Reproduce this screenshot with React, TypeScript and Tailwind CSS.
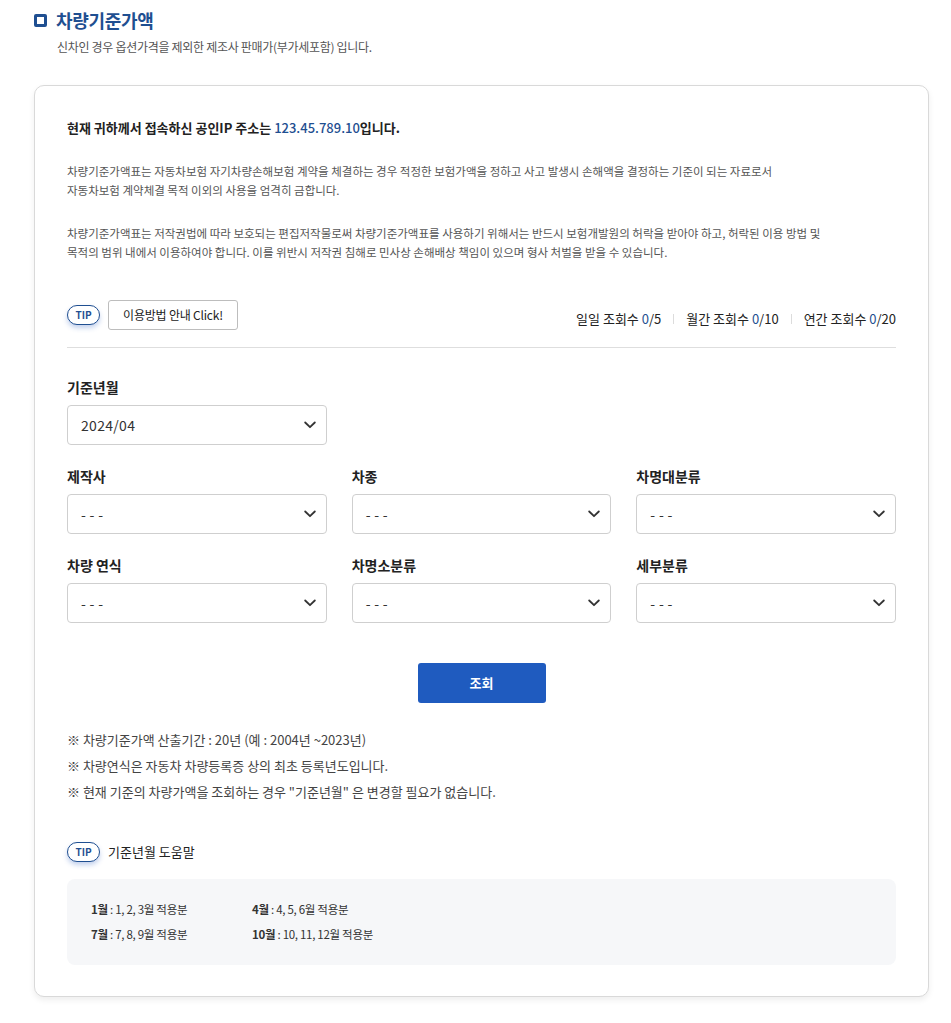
import React from "react";

const FONT = { fontFamily: '"Noto Sans CJK KR", "Noto Sans", sans-serif' };

function Chevron() {
  return (
    <svg width="12" height="8" viewBox="0 0 12 8" fill="none">
      <path d="M1.2 1.5 L6 6.2 L10.8 1.5" stroke="#333" strokeWidth="1.8" strokeLinecap="round" strokeLinejoin="round" />
    </svg>
  );
}

function Select({ value }: { value: string }) {
  return (
    <div className="h-[40px] w-full rounded-[4px] border border-[#cfcfcf] bg-white flex items-center justify-between pl-[13px] pr-[10px]">
      <span className="text-[14px] text-[#333] tracking-[0.3px]">{value}</span>
      <Chevron />
    </div>
  );
}

function Field({ label, value }: { label: string; value: string }) {
  return (
    <div className="flex flex-col">
      <div className="h-[20px] leading-[20px] text-[14px] font-semibold text-[#222]">{label}</div>
      <div className="mt-[8px]">
        <Select value={value} />
      </div>
    </div>
  );
}

function Tip() {
  return (
    <span className="inline-flex items-center justify-center h-[20px] w-[33px] rounded-full border border-[#1f4f91] text-[10px] font-semibold text-[#1f4f91] bg-white shadow-[0_3px_5px_rgba(40,90,190,0.28)] leading-none">
      TIP
    </span>
  );
}

export default function App() {
  return (
    <div style={FONT} className="w-[951px] min-h-[1023px] bg-white pl-[34px] pr-[22px] pt-[8px] pb-[25px]">
      <div className="flex items-center gap-[9px] h-[24px]">
        <span className="block w-[13px] h-[13px] border-[3px] border-[#1f4f91] rounded-[2px]" />
        <h2 className="text-[18px] font-semibold text-[#1f4f91] leading-[24px] tracking-[-0.3px]">차량기준가액</h2>
      </div>
      <p className="mt-[6px] pl-[23px] text-[12px] leading-[18px] text-[#555] tracking-[-0.3px]">
        신차인 경우 옵션가격을 제외한 제조사 판매가(부가세포함) 입니다.
      </p>

      <div className="mt-[29px] w-[895px] rounded-[10px] border border-[#d9d9d9] bg-white shadow-[0_3px_6px_rgba(0,0,0,0.07)] px-[32px] pt-[32px] pb-[31px]">
        <p className="text-[13px] leading-[20px] font-semibold text-[#222]">
          현재 귀하께서 접속하신 공인IP 주소는 <span className="text-[#1f4f91] font-medium">123.45.789.10</span>입니다.
        </p>
        <p className="mt-[24px] text-[11.5px] leading-[19px] text-[#555]">
          차량기준가액표는 자동차보험 자기차량손해보험 계약을 체결하는 경우 적정한 보험가액을 정하고 사고 발생시 손해액을 결정하는 기준이 되는 자료로서
          <br />
          자동차보험 계약체결 목적 이외의 사용을 엄격히 금합니다.
        </p>
        <p className="mt-[24px] text-[11.5px] leading-[19px] text-[#555]">
          차량기준가액표는 저작권법에 따라 보호되는 편집저작물로써 차량기준가액표를 사용하기 위해서는 반드시 보험개발원의 허락을 받아야 하고, 허락된 이용 방법 및
          <br />
          목적의 범위 내에서 이용하여야 합니다. 이를 위반시 저작권 침해로 민사상 손해배상 책임이 있으며 형사 처벌을 받을 수 있습니다.
        </p>

        <div className="mt-[38px] flex items-center justify-between h-[30px]">
          <div className="flex items-center gap-[8px]">
            <Tip />
            <button className="h-[30px] w-[130px] rounded-[3px] border border-[#bdbdbd] bg-white text-[12px] text-[#222] tracking-[-0.2px]">
              이용방법 안내 Click!
            </button>
          </div>
          <div className="flex items-center self-end h-[20px] mb-[1px] text-[13px] text-[#222]">
            <span>
              일일 조회수 <span className="text-[#1f4f91]">0</span>/5
            </span>
            <span className="mx-[12px] h-[10px] w-px bg-[#dcdcdc]" />
            <span>
              월간 조회수 <span className="text-[#1f4f91]">0</span>/10
            </span>
            <span className="mx-[12px] h-[10px] w-px bg-[#dcdcdc]" />
            <span>
              연간 조회수 <span className="text-[#1f4f91]">0</span>/20
            </span>
          </div>
        </div>

        <div className="mt-[17px] border-t border-[#dedede]" />

        <div className="mt-[29px] w-[260px]">
          <Field label="기준년월" value="2024/04" />
        </div>

        <div className="mt-[21px] grid grid-cols-3 gap-x-[25px] gap-y-[21px]">
          <Field label="제작사" value="- - -" />
          <Field label="차종" value="- - -" />
          <Field label="차명대분류" value="- - -" />
          <Field label="차량 연식" value="- - -" />
          <Field label="차명소분류" value="- - -" />
          <Field label="세부분류" value="- - -" />
        </div>

        <div className="mt-[40px] flex justify-center">
          <button className="h-[40px] w-[128px] rounded-[3px] bg-[#1f5bbf] text-white text-[13px] font-semibold">조회</button>
        </div>

        <ul className="mt-[24px] text-[13px] leading-[26px] text-[#444]">
          <li>※ 차량기준가액 산출기간 : 20년 (예 : 2004년 ~2023년)</li>
          <li>※ 차량연식은 자동차 차량등록증 상의 최초 등록년도입니다.</li>
          <li>※ 현재 기준의 차량가액을 조회하는 경우 "기준년월" 은 변경할 필요가 없습니다.</li>
        </ul>

        <div className="mt-[37px] flex items-center gap-[8px] h-[20px]">
          <Tip />
          <span className="text-[13px] text-[#222]">기준년월 도움말</span>
        </div>

        <div className="mt-[17px] rounded-[8px] bg-[#f6f7f9] pl-[24px] py-[18px] text-[11.5px] leading-[25px] text-[#333] tracking-[-0.3px]">
          <div className="flex">
            <span className="w-[161px]"><b className="font-semibold">1월</b> : 1, 2, 3월 적용분</span>
            <span><b className="font-semibold">4월</b> : 4, 5, 6월 적용분</span>
          </div>
          <div className="flex">
            <span className="w-[161px]"><b className="font-semibold">7월</b> : 7, 8, 9월 적용분</span>
            <span><b className="font-semibold">10월</b> : 10, 11, 12월 적용분</span>
          </div>
        </div>
      </div>
    </div>
  );
}
